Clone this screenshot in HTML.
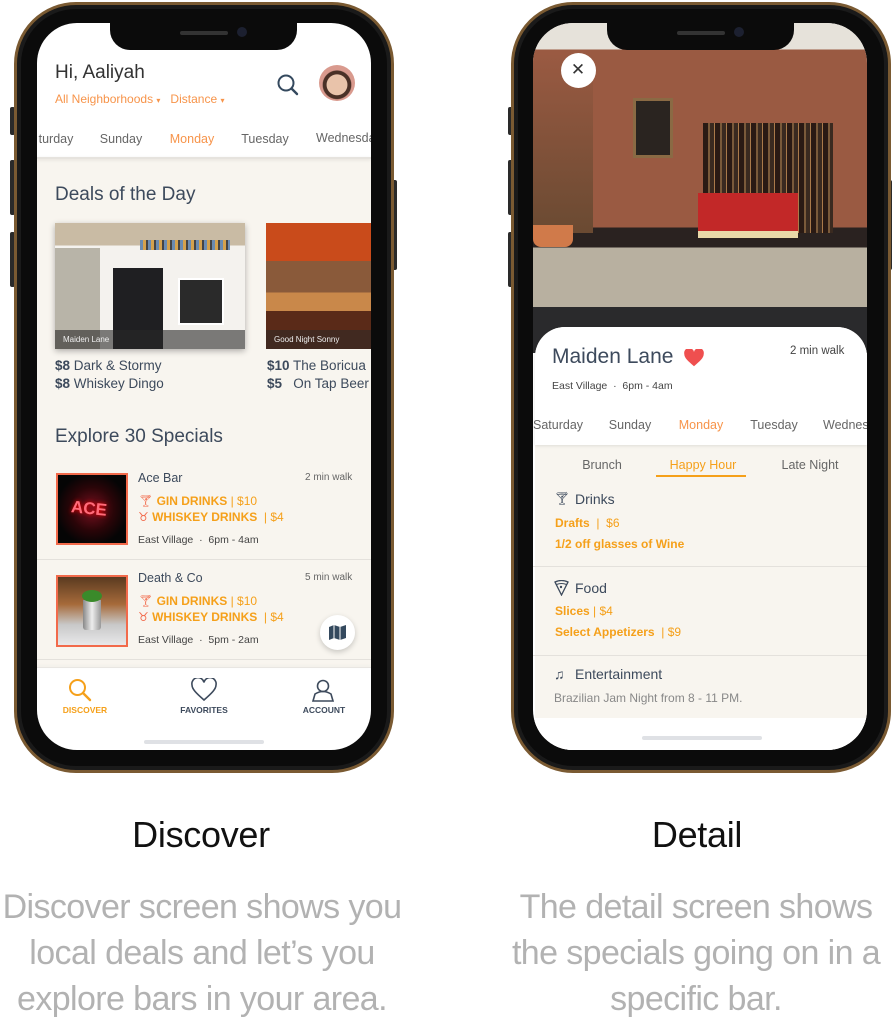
<!DOCTYPE html>
<html><head><meta charset="utf-8"><style>
*{margin:0;padding:0;box-sizing:border-box}
body{width:892px;height:1018px;background:#fff;position:relative;overflow:hidden;font-family:"Liberation Sans",sans-serif}
.a{position:absolute;white-space:nowrap}
.frame{position:absolute;border-radius:62px;background:#0b0b0b;border:3px solid #7a5a32;box-shadow:inset 0 0 0 4px #1a1a1a}
.screen{position:absolute;border-radius:40px;overflow:hidden;background:#fff}
.notch{position:absolute;background:#0b0b0b;border-radius:0 0 20px 20px}
.btn{position:absolute;background:#2a2a2a;border-radius:2px}
.or{color:#f5a01a;font-weight:bold}
.g{color:#555}
.t{position:absolute;white-space:nowrap;transform:translate(-50%,-50%)}
</style></head><body>

<!-- LEFT PHONE -->
<div class="btn" style="left:10px;top:107px;width:5px;height:28px"></div>
<div class="btn" style="left:10px;top:160px;width:5px;height:55px"></div>
<div class="btn" style="left:10px;top:232px;width:5px;height:55px"></div>
<div class="btn" style="left:392px;top:180px;width:5px;height:90px"></div>
<div class="frame" style="left:14px;top:2px;width:380px;height:771px"></div>
<div class="screen" style="left:37px;top:23px;width:334px;height:727px">
  <div class="a" style="left:0;top:135px;width:334px;height:510px;background:#f8f5ef"></div>
  <div class="a" style="left:0;top:134px;width:334px;height:2px;background:#e6e3de;box-shadow:0 1px 3px rgba(0,0,0,.1)"></div>
</div>
<div class="notch" style="left:110px;top:23px;width:187px;height:27px"></div>
<div class="a" style="left:180px;top:31px;width:48px;height:4px;background:#333;border-radius:2px"></div>
<div class="a" style="left:237px;top:27px;width:10px;height:10px;background:#1c2030;border-radius:50%"></div>

<div class="a" style="left:55px;top:62px;font-size:19px;color:#333">Hi, Aaliyah</div>
<div class="a" style="left:55px;top:92px;font-size:12px;color:#f7944a">All Neighborhoods <span style="font-size:8px">▾</span>&nbsp;&nbsp; Distance <span style="font-size:8px">▾</span></div>
<svg class="a" style="left:276px;top:73px" width="24" height="24" viewBox="0 0 24 24"><circle cx="10" cy="10" r="7.5" fill="none" stroke="#34495e" stroke-width="2"/><line x1="15.5" y1="15.5" x2="21" y2="21" stroke="#34495e" stroke-width="2.4" stroke-linecap="round"/></svg>
<div class="a" style="left:319px;top:65px;width:36px;height:36px;border-radius:50%;background:radial-gradient(circle at 50% 55%,#e9c3aa 0 38%,#4a3026 40% 52%,#d99a8e 55%)"></div>

<div class="t" style="left:56px;top:139px;font-size:12.5px;color:#666">turday</div>
<div class="t" style="left:121px;top:139px;font-size:12.5px;color:#666">Sunday</div>
<div class="t" style="left:192px;top:139px;font-size:12.5px;color:#f7944a">Monday</div>
<div class="t" style="left:265px;top:139px;font-size:12.5px;color:#666">Tuesday</div>
<div class="a" style="left:316px;top:131px;font-size:12.5px;color:#666;width:55px;overflow:hidden">Wednesday</div>

<div class="a" style="left:55px;top:184px;font-size:19px;color:#3d4a5c">Deals of the Day</div>
<div class="a" style="left:55px;top:223px;width:190px;height:126px;background:linear-gradient(180deg,#c9bba4 0 18%,#f4f2ee 18% 100%);box-shadow:0 2px 6px rgba(0,0,0,.3);overflow:hidden">
  <div class="a" style="left:0;top:25px;width:45px;height:101px;background:#b8b4a8"></div>
  <div class="a" style="left:58px;top:45px;width:50px;height:81px;background:#1f1f22"></div>
  <div class="a" style="left:123px;top:55px;width:46px;height:47px;background:#2a2a2a;border:2px solid #fff"></div>
  <div class="a" style="left:85px;top:17px;width:90px;height:10px;background:repeating-linear-gradient(90deg,#6a8bb0 0 3px,#d4a24d 3px 6px,#444 6px 8px)"></div>
  <div class="a" style="left:0;top:107px;width:190px;height:19px;background:rgba(40,40,40,.6);color:#eee;font-size:8px;padding:5px 8px">Maiden Lane</div>
</div>
<div class="a" style="left:266px;top:223px;width:105px;height:126px;background:linear-gradient(180deg,#c94b1b 0 30%,#8a5a3a 30% 55%,#c9884a 55% 70%,#5a2a18 70%);overflow:hidden">
  <div class="a" style="left:0;top:107px;width:105px;height:19px;background:rgba(40,40,40,.5);color:#eee;font-size:8px;padding:5px 8px">Good Night Sonny</div>
</div>
<div class="a" style="left:55px;top:357px;font-size:13.5px;color:#3d4a5c;line-height:18px"><b>$8</b> Dark &amp; Stormy<br><b>$8</b> Whiskey Dingo</div>
<div class="a" style="left:267px;top:357px;font-size:13.5px;color:#3d4a5c;line-height:18px;width:104px;overflow:hidden"><b>$10</b> The Boricua<br><b>$5</b>&nbsp;&nbsp; On Tap Beer</div>

<div class="a" style="left:55px;top:426px;font-size:19px;color:#3d4a5c">Explore 30 Specials</div>
<!-- item1 -->
<div class="a" style="left:56px;top:473px;width:72px;height:72px;border:2px solid #f26a4b;background:radial-gradient(ellipse at 50% 50%,#7a1020 0,#2a0508 45%,#050505 75%)"></div>
<div class="a" style="left:71px;top:499px;font-size:17px;color:#ff6b7a;font-weight:bold;transform:rotate(6deg);text-shadow:0 0 4px #f00">ACE</div>
<div class="a" style="left:138px;top:471px;font-size:12.5px;color:#3d4a5c">Ace Bar</div>
<div class="a" style="left:305px;top:472px;font-size:10px;color:#666">2 min walk</div>
<div class="a" style="left:138px;top:494px;font-size:12px"><span style="color:#f26a4b">🍸︎</span> <span class="or">GIN DRINKS</span> <span style="color:#f5a01a">| $10</span></div>
<div class="a" style="left:138px;top:510px;font-size:12px"><span style="color:#f26a4b">♉︎</span> <span class="or">WHISKEY DRINKS</span> <span style="color:#f5a01a">&nbsp;| $4</span></div>
<div class="a" style="left:138px;top:534px;font-size:10.5px;color:#444">East Village &nbsp;·&nbsp; 6pm - 4am</div>
<div class="a" style="left:37px;top:559px;width:334px;height:1px;background:#e4e1dc"></div>
<!-- item2 -->
<div class="a" style="left:56px;top:575px;width:72px;height:72px;border:2px solid #f26a4b;background:linear-gradient(180deg,#5a3a20 0,#a66a3a 40%,#c8c8c8 70%,#e8e8ea 100%)"></div>
<div class="a" style="left:83px;top:600px;width:18px;height:30px;background:linear-gradient(90deg,#888,#eee,#999);border-radius:0 0 3px 3px"></div>
<div class="a" style="left:82px;top:590px;width:20px;height:12px;background:#3a8a2a;border-radius:50%"></div>
<div class="a" style="left:138px;top:571px;font-size:12.5px;color:#3d4a5c">Death &amp; Co</div>
<div class="a" style="left:305px;top:572px;font-size:10px;color:#666">5 min walk</div>
<div class="a" style="left:138px;top:594px;font-size:12px"><span style="color:#f26a4b">🍸︎</span> <span class="or">GIN DRINKS</span> <span style="color:#f5a01a">| $10</span></div>
<div class="a" style="left:138px;top:610px;font-size:12px"><span style="color:#f26a4b">♉︎</span> <span class="or">WHISKEY DRINKS</span> <span style="color:#f5a01a">&nbsp;| $4</span></div>
<div class="a" style="left:138px;top:634px;font-size:10.5px;color:#444">East Village &nbsp;·&nbsp; 5pm - 2am</div>
<div class="a" style="left:37px;top:659px;width:334px;height:1px;background:#e4e1dc"></div>
<div class="a" style="left:320px;top:615px;width:35px;height:35px;border-radius:50%;background:#fff;box-shadow:0 2px 6px rgba(0,0,0,.2)"></div>
<svg class="a" style="left:328px;top:623px" width="19" height="19" viewBox="0 0 19 19"><path d="M1 4 L6 2 L12 4 L18 2 L18 15 L12 17 L6 15 L1 17Z" fill="#34495e"/><path d="M6 2V15M12 4V17" stroke="#fff" stroke-width="1"/></svg>
<!-- tab bar -->
<div class="a" style="left:37px;top:667px;width:334px;height:1px;background:#e8e6e2;box-shadow:0 -1px 3px rgba(0,0,0,.08)"></div>
<svg class="a" style="left:68px;top:678px" width="24" height="24" viewBox="0 0 24 24"><circle cx="9.5" cy="9.5" r="7.5" fill="none" stroke="#f5a01a" stroke-width="2"/><line x1="15" y1="15" x2="22" y2="22" stroke="#f5a01a" stroke-width="2.4" stroke-linecap="round"/></svg>
<div class="t" style="left:85px;top:710px;font-size:8.5px;font-weight:bold;color:#f5a01a">DISCOVER</div>
<svg class="a" style="left:191px;top:678px" width="26" height="24" viewBox="0 0 26 24"><path d="M13 22 C5 15 1 11 1 7 A5.5 5.5 0 0 1 13 4.5 A5.5 5.5 0 0 1 25 7 C25 11 21 15 13 22Z" fill="none" stroke="#3d4a5c" stroke-width="1.6"/></svg>
<div class="t" style="left:204px;top:710px;font-size:8.5px;font-weight:bold;color:#3d4a5c">FAVORITES</div>
<svg class="a" style="left:311px;top:678px" width="24" height="24" viewBox="0 0 24 24"><circle cx="12" cy="8" r="5.5" fill="none" stroke="#3d4a5c" stroke-width="1.6"/><path d="M2 23 L4 16 Q12 11 20 16 L22 23Z" fill="none" stroke="#3d4a5c" stroke-width="1.6"/></svg>
<div class="t" style="left:324px;top:710px;font-size:8.5px;font-weight:bold;color:#3d4a5c">ACCOUNT</div>
<div class="a" style="left:144px;top:740px;width:120px;height:4px;border-radius:2px;background:#dfe1e5"></div>

<!-- RIGHT PHONE -->
<div class="btn" style="left:508px;top:107px;width:5px;height:28px"></div>
<div class="btn" style="left:508px;top:160px;width:5px;height:55px"></div>
<div class="btn" style="left:508px;top:232px;width:5px;height:55px"></div>
<div class="btn" style="left:888px;top:180px;width:4px;height:90px"></div>
<div class="frame" style="left:511px;top:2px;width:380px;height:771px"></div>
<div class="screen" style="left:533px;top:23px;width:334px;height:727px">
  <div class="a" style="left:0;top:0;width:334px;height:330px;background:linear-gradient(180deg,#e6e2da 0 8%,#9a5a42 8% 62%,#2a2220 62% 68%,#b8b0a0 68% 86%,#2a2a2c 86%)"></div>
  <div class="a" style="left:0;top:30px;width:60px;height:180px;background:linear-gradient(180deg,#9a5a42,#6a4a32);"></div>
  <div class="a" style="left:100px;top:75px;width:40px;height:60px;background:#2a2420;border:3px solid #8a6a44"></div>
  <div class="a" style="left:170px;top:100px;width:130px;height:110px;background:repeating-linear-gradient(90deg,#2a1a14 0 5px,#7a5a3a 5px 7px,#3a2a20 7px 11px,#aa7a4a 11px 12px)"></div>
  <div class="a" style="left:165px;top:170px;width:100px;height:45px;background:#c22828;border-bottom:7px solid #e8d8a8"></div>
  <div class="a" style="left:0;top:202px;width:40px;height:22px;background:#d07a4a;border-radius:0 0 8px 8px"></div>
  <div class="a" style="left:2px;top:304px;width:332px;height:423px;background:#f8f5ef;border-radius:30px 30px 0 0"></div>
  <div class="a" style="left:2px;top:304px;width:332px;height:118px;background:#fff;border-radius:30px 30px 0 0;box-shadow:0 1px 3px rgba(0,0,0,.1)"></div>
  <div class="a" style="left:0;top:695px;width:334px;height:32px;background:#fff"></div>
</div>
<div class="notch" style="left:607px;top:23px;width:187px;height:27px"></div>
<div class="a" style="left:677px;top:31px;width:48px;height:4px;background:#333;border-radius:2px"></div>
<div class="a" style="left:734px;top:27px;width:10px;height:10px;background:#1c2030;border-radius:50%"></div>
<div class="a" style="left:561px;top:53px;width:35px;height:35px;border-radius:50%;background:#fff"></div>
<div class="t" style="left:578px;top:70px;font-size:17px;color:#333">✕</div>

<div class="a" style="left:552px;top:345px;font-size:21px;color:#3d4a5c">Maiden Lane</div>
<svg class="a" style="left:684px;top:349px" width="20" height="18" viewBox="0 0 26 24"><path d="M13 23 C5 16 0 12 0 6.5 A6 6 0 0 1 13 4 A6 6 0 0 1 26 6.5 C26 12 21 16 13 23Z" fill="#ef4f4f"/></svg>
<div class="a" style="left:790px;top:345px;font-size:11.5px;color:#444">2 min walk</div>
<div class="a" style="left:552px;top:380px;font-size:10.5px;color:#444">East Village &nbsp;·&nbsp; 6pm - 4am</div>
<div class="a" style="left:533px;top:418px;font-size:12.5px;color:#666">Saturday</div>
<div class="t" style="left:630px;top:425px;font-size:12.5px;color:#666">Sunday</div>
<div class="t" style="left:701px;top:425px;font-size:12.5px;color:#f7944a">Monday</div>
<div class="t" style="left:774px;top:425px;font-size:12.5px;color:#666">Tuesday</div>
<div class="a" style="left:823px;top:418px;font-size:12.5px;color:#666;width:44px;overflow:hidden">Wednesday</div>

<div class="t" style="left:602px;top:465px;font-size:12.5px;color:#666">Brunch</div>
<div class="t" style="left:703px;top:465px;font-size:12.5px;color:#f5a01a">Happy Hour</div>
<div class="a" style="left:656px;top:475px;width:90px;height:2px;background:#f5a01a"></div>
<div class="t" style="left:810px;top:465px;font-size:12.5px;color:#666">Late Night</div>

<div class="a" style="left:554px;top:491px;font-size:13px;color:#3d4a5c">🍸︎</div>
<div class="a" style="left:575px;top:491px;font-size:14px;color:#3d4a5c">Drinks</div>
<div class="a" style="left:555px;top:516px;font-size:12px"><span class="or">Drafts</span> <span style="color:#f5a01a">&nbsp;| &nbsp;$6</span></div>
<div class="a" style="left:555px;top:537px;font-size:12px" ><span class="or">1/2 off glasses of Wine</span></div>
<div class="a" style="left:533px;top:566px;width:334px;height:1px;background:#e4e1dc"></div>
<svg class="a" style="left:554px;top:580px" width="15" height="16" viewBox="0 0 15 16"><path d="M1 2 Q7.5 -1 14 2 L7.5 15Z" fill="none" stroke="#3d4a5c" stroke-width="1.3"/><path d="M2.5 4.5 Q7.5 2.5 12.5 4.5" fill="none" stroke="#3d4a5c" stroke-width="1"/><circle cx="7" cy="7" r="1.2" fill="#3d4a5c"/></svg>
<div class="a" style="left:575px;top:580px;font-size:14px;color:#3d4a5c">Food</div>
<div class="a" style="left:555px;top:604px;font-size:12px"><span class="or">Slices</span> <span style="color:#f5a01a">| $4</span></div>
<div class="a" style="left:555px;top:625px;font-size:12px"><span class="or">Select Appetizers</span> <span style="color:#f5a01a">&nbsp;| $9</span></div>
<div class="a" style="left:533px;top:655px;width:334px;height:1px;background:#e4e1dc"></div>
<div class="a" style="left:554px;top:666px;font-size:14px;color:#3d4a5c">♫</div>
<div class="a" style="left:575px;top:666px;font-size:14px;color:#3d4a5c">Entertainment</div>
<div class="a" style="left:554px;top:691px;font-size:12px;color:#888">Brazilian Jam Night from 8 - 11 PM.</div>
<div class="a" style="left:642px;top:736px;width:120px;height:4px;border-radius:2px;background:#dfe1e5"></div>

<!-- captions -->
<div class="t" style="left:201px;top:835px;font-size:36px;color:#111;letter-spacing:-0.3px">Discover</div>
<div class="t" style="left:697px;top:835px;font-size:36px;color:#111;letter-spacing:-0.3px">Detail</div>
<div class="a" style="left:-20px;top:884px;width:444px;text-align:center;font-size:34px;line-height:46px;color:#b2b2b2;letter-spacing:-0.6px">Discover screen shows you<br>local deals and let’s you<br>explore bars in your area.</div>
<div class="a" style="left:476px;top:884px;width:440px;text-align:center;font-size:34px;line-height:46px;color:#b2b2b2;letter-spacing:-0.6px">The detail screen shows<br>the specials going on in a<br>specific bar.</div>
</body></html>
